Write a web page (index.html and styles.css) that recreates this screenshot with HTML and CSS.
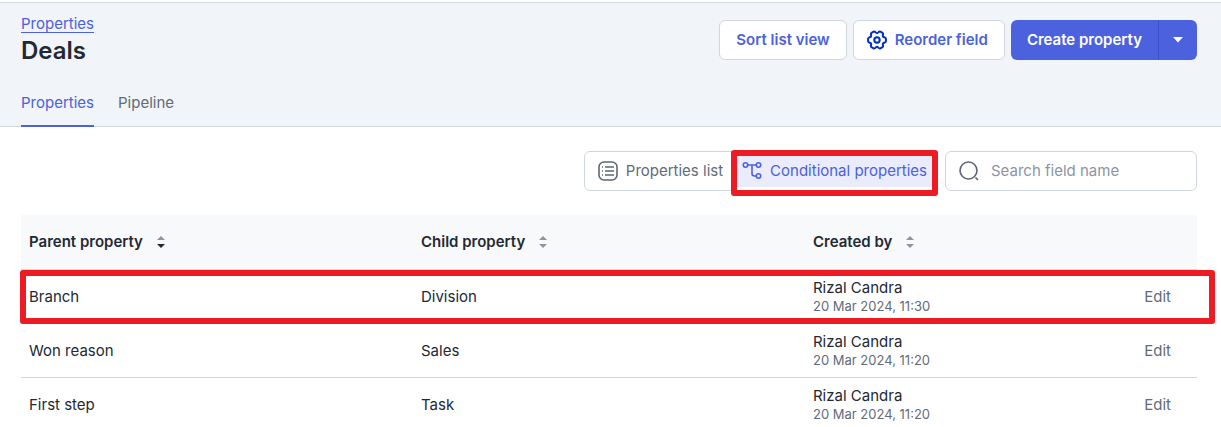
FILE: index.html
```html
<!DOCTYPE html>
<html lang="en">
<head>
  <meta charset="UTF-8">
  <title>Deals properties</title>
  <meta name="viewport" content="width=device-width, initial-scale=1">
  <link rel="stylesheet" href="styles.css">
</head>
<body>
<header class="page-header">
  <div class="header-row">
    <div class="title-block">
      <a class="breadcrumb" href="#">Properties</a>
      <h1>Deals</h1>
    </div>
    <div class="actions">
      <button class="btn" type="button">Sort list view</button>
      <button class="btn btn-icon" type="button">
        <svg class="gear" width="20" height="20" viewBox="-10 -10 20 20" aria-hidden="true">
          <path d="M5.9 -3.4C6.5 -2.4 8.9 -2.9 8.9 -1.2V1.2C8.9 2.9 6.5 2.4 5.9 3.4C5.3 4.4 7 6.3 5.5 7.1L3.4 8.3C1.9 9.2 1.2 6.8 0 6.8C-1.2 6.8 -1.9 9.2 -3.4 8.3L-5.5 7.1C-7 6.3 -5.3 4.4 -5.9 3.4C-6.5 2.4 -8.9 2.9 -8.9 1.2V-1.2C-8.9 -2.9 -6.5 -2.4 -5.9 -3.4C-5.3 -4.4 -7 -6.3 -5.5 -7.1L-3.4 -8.3C-1.9 -9.2 -1.2 -6.8 0 -6.8C1.2 -6.8 1.9 -9.2 3.4 -8.3L5.5 -7.1C7 -6.3 5.3 -4.4 5.9 -3.4z"/>
          <circle r="2.7"/>
        </svg>
        Reorder field
      </button>
      <div class="split-btn">
        <button class="split-main" type="button">Create property</button>
        <button class="split-toggle" type="button" aria-label="More create options">
          <svg width="10" height="6" viewBox="0 0 10 6" aria-hidden="true"><path d="M0 0h10L5 5.5z"/></svg>
        </button>
      </div>
    </div>
  </div>
  <nav class="tabs">
    <a class="tab active" href="#">Properties</a>
    <a class="tab" href="#">Pipeline</a>
  </nav>
</header>

<main class="content">
  <div class="toolbar">
    <div class="segmented">
      <button class="segment" type="button">
        <svg width="20" height="20" viewBox="0 0 20 20" aria-hidden="true">
          <rect x="1" y="1" width="18" height="18" rx="5"/>
          <path d="M7 6h9M7 10h9M7 14h9M4 6h1M4 10h1M4 14h1"/>
        </svg>
        Properties list
      </button>
      <button class="segment active" type="button">
        <svg width="20" height="20" viewBox="0 0 20 20" aria-hidden="true">
          <circle cx="3.5" cy="4" r="2.2"/>
          <circle cx="16.5" cy="4" r="2.2"/>
          <circle cx="16.500" cy="15" r="2.2"/>
          <path d="M5.700 4h8.600M10 4v8.500q0 2.500 2.500 2.500h1.800"/>
        </svg>
        Conditional properties
      </button>
    </div>
    <label class="search">
      <svg width="20" height="20" viewBox="0 0 20 20" aria-hidden="true">
        <circle cx="9.5" cy="9.5" r="8.5"/>
        <path d="M16.500 16.500l2.500 2.500"/>
      </svg>
      <input type="text" placeholder="Search field name" aria-label="Search field name">
    </label>
  </div>

  <table class="table">
    <thead>
      <tr>
        <th class="name-col">Parent property
          <svg class="sort sorted" width="8" height="14" viewBox="0 0 8 14" aria-hidden="true"><path d="M0 5l4-4 4 4z"/><path class="down" d="M0 9l4 4 4-4z"/></svg>
        </th>
        <th class="name-col">Child property
          <svg class="sort" width="8" height="14" viewBox="0 0 8 14" aria-hidden="true"><path d="M0 5l4-4 4 4z"/><path class="down" d="M0 9l4 4 4-4z"/></svg>
        </th>
        <th>Created by
          <svg class="sort" width="8" height="14" viewBox="0 0 8 14" aria-hidden="true"><path d="M0 5l4-4 4 4z"/><path class="down" d="M0 9l4 4 4-4z"/></svg>
        </th>
        <th class="edit-col"></th>
      </tr>
    </thead>
    <tbody>
      <tr class="highlighted">
        <td>Branch</td>
        <td>Division</td>
        <td>Rizal Candra<span class="date">20 Mar 2024, 11:30</span></td>
        <td class="edit-col"><a href="#">Edit</a></td>
      </tr>
      <tr>
        <td>Won reason</td>
        <td>Sales</td>
        <td>Rizal Candra<span class="date">20 Mar 2024, 11:20</span></td>
        <td class="edit-col"><a href="#">Edit</a></td>
      </tr>
      <tr>
        <td>First step</td>
        <td>Task</td>
        <td>Rizal Candra<span class="date">20 Mar 2024, 11:20</span></td>
        <td class="edit-col"><a href="#">Edit</a></td>
      </tr>
    </tbody>
  </table>
</main>
</body>
</html>
```
FILE: styles.css
```css
* { box-sizing: border-box; }
html, body {
  height: 100%;
  margin: 0;
}
body {
  overflow: hidden;
  padding-top: 2px;
  background: #fff;
  color: #232933;
  font-family: Inter, "Liberation Sans", sans-serif;
  font-size: 15px;
  line-height: 20px;
}
button, input { font: inherit; }
a { color: inherit; text-decoration: none; }
svg { flex: none; fill: none; }

/* header */
.page-header {
  padding: 11px 24px 0 21px;
  background: #f1f4f9;
  border-top: 1px solid #d5dbe5;
  border-bottom: 1px solid #d0d6dd;
}
.header-row {
  display: flex;
  justify-content: space-between;
  align-items: flex-start;
}
.title-block {
  display: flex;
  flex-direction: column;
  align-items: flex-start;
}
.breadcrumb {
  height: 19px;
  color: #4b61dd;
  border-bottom: 1px solid #4b61dd;
}
h1 {
  margin: 4px 0 0;
  font-size: 24px;
  line-height: 28px;
  font-weight: 600;
}
.actions {
  display: flex;
  gap: 6px;
  padding-top: 6px;
}
.btn, .split-btn button {
  display: flex;
  align-items: center;
  height: 40px;
  padding: 0 16px;
  font-weight: 600;
  white-space: nowrap;
  cursor: pointer;
}
.btn {
  gap: 8px;
  color: #4b61dd;
  background: #fff;
  border: 1px solid #d0d6dd;
  border-radius: 6px;
}
.btn-icon { padding-left: 13px; }
.gear { stroke: #0031be; stroke-width: 2; }
.split-btn {
  display: flex;
  overflow: hidden;
  border-radius: 6px;
}
.split-btn button {
  color: #fff;
  background: #4b61dd;
  border: 0;
}
.split-btn .split-toggle {
  padding: 0 14px;
  border-left: 1px solid #3a50c8;
}
.split-toggle svg { fill: #fff; }
.tabs {
  display: flex;
  gap: 24px;
  margin-top: 28px;
  margin-bottom: -1px;
}
.tab {
  height: 34px;
  color: #626b79;
}
.tab.active {
  color: #4b61dd;
  border-bottom: 2px solid #4b61dd;
}

/* toolbar */
.content { padding: 24px 24px 0 21px; }
.toolbar {
  display: flex;
  justify-content: flex-end;
  gap: 7px;
  margin-bottom: 24px;
}
.segmented {
  display: flex;
  height: 40px;
  padding: 3px 5px;
  border: 1px solid #d0d6dd;
  border-radius: 6px;
}
.segment {
  position: relative;
  display: flex;
  align-items: center;
  gap: 8px;
  padding: 0 8px;
  border: 0;
  background: none;
  color: #626b79;
  white-space: nowrap;
  cursor: pointer;
}
.segment svg { stroke: #5c6675; stroke-width: 1.6; }
.segment.active {
  margin-left: 6px;
  padding: 0 5px;
  color: #4b61dd;
  background: #eaecfb;
}
.segment.active svg { stroke: #4b61dd; }
.segment.active::after {
  content: "";
  position: absolute;
  inset: -5px -6px -9px;
  border: 6px solid #ed1c24;
  border-radius: 3px;
}
.search {
  display: flex;
  align-items: center;
  gap: 12px;
  width: 252px;
  height: 40px;
  padding: 0 13px;
  border: 1px solid #d0d6dd;
  border-radius: 6px;
}
.search svg { stroke: #5c6675; stroke-width: 1.6; }
.search input {
  width: 100%;
  min-width: 0;
  padding: 0;
  border: 0;
  outline: none;
  background: none;
}
.search input::placeholder { color: #8b95a5; }

/* table */
.table {
  width: 100%;
  table-layout: fixed;
  border-collapse: separate;
  border-spacing: 0;
}
.table th, .table td {
  height: 54px;
  padding: 0 8px;
  border-bottom: 1px solid #d0d6dd;
  text-align: left;
}
.table th {
  height: 55px;
  background: #f8f9fb;
  font-weight: 600;
}
.name-col { width: 33.333%; }
.sort {
  margin-left: 10px;
  vertical-align: -2px;
  fill: #8b95a5;
}
.sorted .down { fill: #232933; }
.date {
  display: block;
  color: #626b79;
  font-size: 13px;
  line-height: 17px;
}
.table .edit-col {
  width: 80px;
  padding-right: 26px;
  color: #626b79;
  text-align: right;
}
/* frame hangs on the first cell so it does not add a column */
.highlighted { position: relative; }
.highlighted td:first-child::after {
  content: "";
  position: absolute;
  inset: 0 -18px 0 -1px;
  border: 6px solid #ed1c24;
  border-radius: 3px;
  pointer-events: none;
}
```
